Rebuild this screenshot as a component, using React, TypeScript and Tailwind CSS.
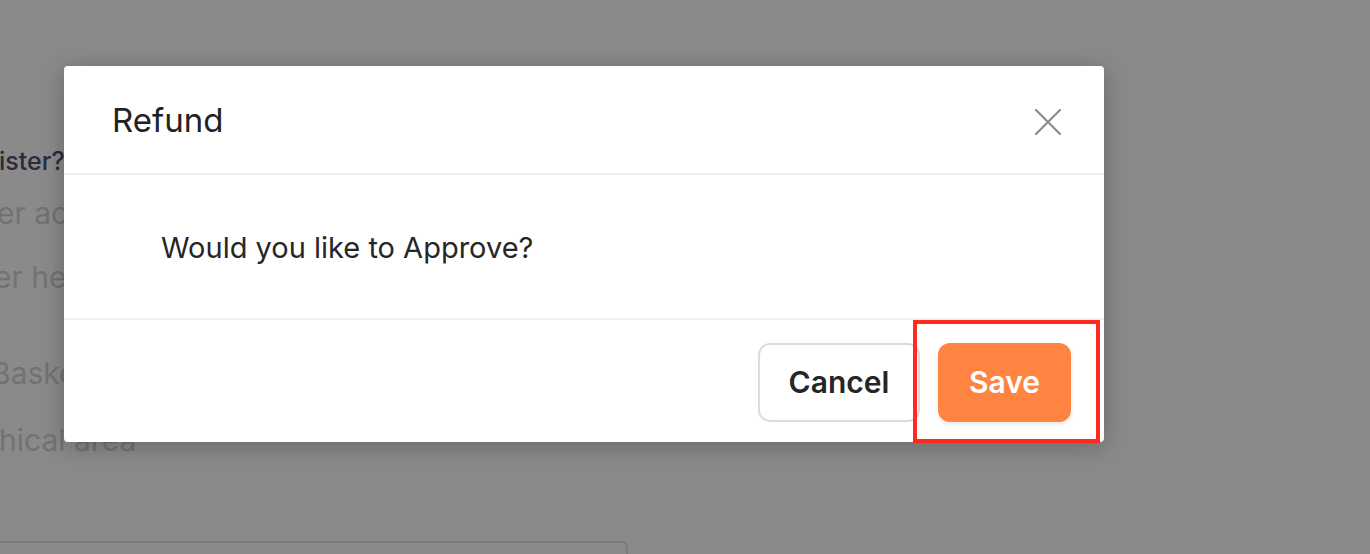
import { X } from 'lucide-react'

const font = { fontFamily: 'Inter, "Noto Sans", sans-serif' }

export default function App() {
  return (
    <div className="relative w-[1370px] h-[554px] overflow-hidden bg-[#8a8a8a]" style={font}>
      {/* Page behind the overlay */}
      <div className="flex flex-col text-[30px] leading-none">
        <div className="h-[148px]" />
        <div className="-ml-[1px] text-[#2b2b3d] text-[25px] font-medium h-[50px] leading-[26px]">ister?</div>
        <div className="-ml-[3px] text-[#727272] h-[64px]">er account</div>
        <div className="-ml-[6px] text-[#727272] h-[96px]">er header</div>
        <div className="-ml-[9px] text-[#727272] h-[67px]">Basket</div>
        <div className="-ml-[1px] text-[#727272] h-[116px]">hical area</div>
        <div className="w-[628px] h-[30px] border-2 border-l-0 border-[#7b7b7b] rounded-tr-md" />
      </div>

      {/* Modal */}
      <div className="absolute left-[64px] top-[66px] w-[1040px] h-[376px] bg-white rounded-[4px] shadow-[0_4px_24px_rgba(0,0,0,0.25)] flex flex-col">
        <div className="h-[109px] flex items-center justify-between pl-[48px] pr-[32px] border-b-2 border-[#efefef]">
          <h2 className="text-[33px] text-[#222] font-normal pt-[3px]">Refund</h2>
          <X className="w-[48px] h-[48px] text-[#8c8c8c] mt-[4px]" strokeWidth={1.1} />
        </div>
        <div className="h-[145px] flex items-center pl-[97px] border-b-2 border-[#efefef]">
          <p className="text-[29px] text-[#262626] pt-[3px]">Would you like to Approve?</p>
        </div>
        <div className="flex-1 flex items-center justify-end gap-[18px] pr-[33px] pt-[2px]">
          <button className="w-[162px] h-[79px] rounded-[12px] border-2 border-[#dcdcdc] bg-white text-[30px] font-semibold text-[#262626]">
            Cancel
          </button>
          <button className="w-[133px] h-[79px] rounded-[12px] bg-[#ff8442] text-[30px] font-semibold text-white shadow-[0_3px_4px_rgba(0,0,0,0.08)]">
            Save
          </button>
        </div>
      </div>

      {/* Highlight annotation */}
      <div className="absolute left-[913px] top-[320px] w-[187px] h-[123px] border-4 border-[#ff2a1f]" />
    </div>
  )
}
